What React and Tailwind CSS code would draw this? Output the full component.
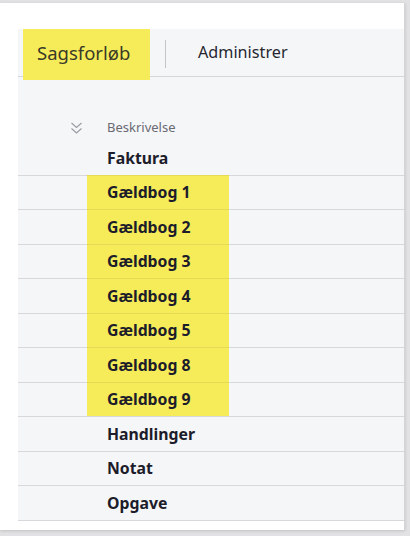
import React from "react";

const rows = [
  { label: "Faktura", hl: false, lineHl: true },
  { label: "Gældbog 1", hl: true, lineHl: true },
  { label: "Gældbog 2", hl: true, lineHl: true },
  { label: "Gældbog 3", hl: true, lineHl: true },
  { label: "Gældbog 4", hl: true, lineHl: true },
  { label: "Gældbog 5", hl: true, lineHl: true },
  { label: "Gældbog 8", hl: true, lineHl: true },
  { label: "Gældbog 9", hl: true, lineHl: false },
  { label: "Handlinger", hl: false, lineHl: false },
  { label: "Notat", hl: false, lineHl: false },
  { label: "Opgave", hl: false, lineHl: false },
];

function Chevrons() {
  return (
    <svg width="13" height="14" viewBox="0 0 13 14" fill="none" stroke="#9a9aa2" strokeWidth="1.1">
      <polyline points="1.5,2 6.5,6.5 11.5,2" />
      <polyline points="1.5,7.5 6.5,12 11.5,7.5" />
    </svg>
  );
}

export default function App() {
  return (
    <div
      className="w-[410px] h-[536px] bg-[#e2e2e4] pt-[3px] pr-[5px] pb-[6px] overflow-hidden"
      style={{ fontFamily: '"Noto Sans", "Open Sans", Arial, sans-serif' }}
    >
      <div className="h-full bg-white pl-[18px] pt-[26px] pb-[9px] border-r border-[#d4d4d6] shadow-[0_1px_3px_rgba(0,0,0,0.15)]">
        <div className="h-full bg-[#f5f6f8] flex flex-col">
          {/* tab bar */}
          <div className="h-[48px] border-b border-[#d6d6da] flex items-start">
            <div className="ml-[5px] w-[127px] h-[51px] bg-[#f6ec5a] flex items-center pl-[14px] pb-[4px] relative z-10">
              <span className="text-[18.5px] text-[#3a3a28] whitespace-nowrap">Sagsforløb</span>
            </div>
            <div className="ml-[15px] mt-[11px] w-px h-[28px] bg-[#c4c4c8]" />
            <div className="ml-[32px] h-[47px] flex items-center pb-[1px]">
              <span className="text-[16.2px] text-[#262630]">Administrer</span>
            </div>
          </div>
          {/* header row */}
          <div className="mt-[37px] h-[27px] flex items-center">
            <div className="ml-[52px] w-[13px] flex items-center">
              <Chevrons />
            </div>
            <span className="ml-[24px] text-[13px] text-[#6a6a72]">Beskrivelse</span>
          </div>
          {rows.map((r) => (
            <div key={r.label} className="flex flex-col">
              <div className="h-[33.5px] flex">
                <div
                  className={
                    "ml-[69px] w-[142px] h-full flex items-center pl-[20px] pt-[2px] " +
                    (r.hl ? "bg-[#f6ec5a]" : "")
                  }
                >
                  <span className="text-[15.8px] font-bold text-[#1c1c2a] whitespace-nowrap">{r.label}</span>
                </div>
              </div>
              <div className="h-px bg-[#d8d8dc] flex">
                {r.lineHl && <div className="ml-[69px] w-[142px] h-px bg-[#e4da58]" />}
              </div>
            </div>
          ))}
        </div>
      </div>
    </div>
  );
}
